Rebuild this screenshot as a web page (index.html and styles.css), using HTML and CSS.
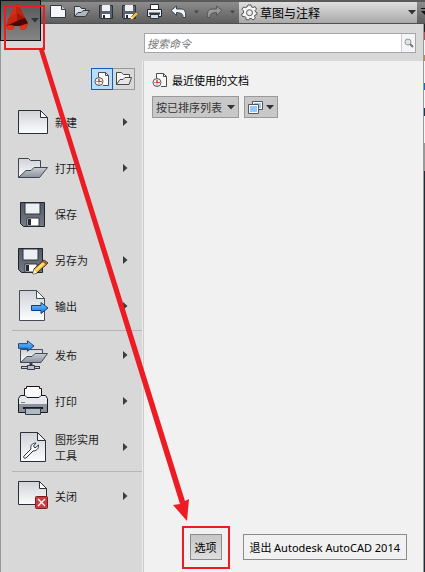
FILE: index.html
```html
<!DOCTYPE html>
<html lang="zh-CN">
<head>
<meta charset="utf-8">
<title>AutoCAD 2014</title>
<link rel="stylesheet" href="styles.css">
</head>
<body>
<svg class="defs" aria-hidden="true">
  <defs>
    <linearGradient id="paper" x1="0" y1="0" x2="0" y2="1"><stop offset="0" stop-color="#cfd2d8"/><stop offset="1" stop-color="#fdfdfd"/></linearGradient>
    <linearGradient id="steel" x1="0" y1="0" x2="0" y2="1"><stop offset="0" stop-color="#c9ced4"/><stop offset="1" stop-color="#8b929c"/></linearGradient>
    <linearGradient id="blue" x1="0" y1="0" x2="0" y2="1"><stop offset="0" stop-color="#7cc0fb"/><stop offset="1" stop-color="#0878e8"/></linearGradient>
    <linearGradient id="disk" x1="0" y1="0" x2="0" y2="1"><stop offset="0" stop-color="#545b66"/><stop offset="1" stop-color="#747b86"/></linearGradient>
    <symbol id="i-new" viewBox="0 0 32 32"><path d="M1.5 4.5H23.5L30.5 11.5V27.5H1.5Z" fill="url(#paper)" stroke="#2a2f38"/><path d="M23.5 4.5V11.5H30.5Z" fill="#fff" stroke="#2a2f38"/></symbol>
    <symbol id="i-open" viewBox="0 0 32 32"><path d="M1.5 25.5V6.5H11.5L13.5 8.5H23.5V16" fill="url(#paper)" stroke="#3f4650"/><path d="M1.5 25.5L9 18.5H14L17 15.5H30.5L22.5 25.5Z" fill="url(#steel)" stroke="#3f4650"/></symbol>
    <symbol id="i-save" viewBox="0 0 32 32"><path d="M3.5 4.5H27.5V28.5H6.5L3.5 25.5Z" fill="url(#disk)" stroke="#1f242c"/><path d="M8 5H23V16H8Z" fill="#edf0f3" stroke="#303640"/><path d="M10 20H22V28H10Z" fill="#fff" stroke="#303640"/><path d="M11 21H14V27H11Z" fill="#252a32"/></symbol>
    <symbol id="i-saveas" viewBox="0 0 32 32"><path d="M1.5 4.5H25.5V28.5H4.5L1.5 25.5Z" fill="url(#disk)" stroke="#1f242c"/><path d="M6 5H21V16H6Z" fill="#edf0f3" stroke="#303640"/><path d="M8 20H20V28H8Z" fill="#fff" stroke="#303640"/><path d="M9 21H12V27H9Z" fill="#252a32"/><path d="M16 30L17 25L27 16L31 19L20 29Z" fill="#f6bd36" stroke="#222"/><path d="M16 30L17 25L20 29Z" fill="#fff3d4"/><path d="M25 18L27 16L31 19L29 21Z" fill="#a75c30"/><path d="M19 26L27 19" stroke="#ffe9a0" stroke-width="1.5"/></symbol>
    <symbol id="i-arrow" viewBox="0 0 18 12"><path d="M.5 3.500H10V.5L17 6L10 11.500V8.500H.5Z" fill="url(#blue)" stroke="#123f73"/></symbol>
    <symbol id="i-export" viewBox="0 0 32 32"><path d="M2.500 .5H19.500L27.500 8.500V30.500H2.500Z" fill="url(#paper)" stroke="#454b55"/><path d="M19.500 .5V8.500H27.500Z" fill="#fff" stroke="#454b55"/><use href="#i-arrow" x="14" y="12" width="18" height="12"/></symbol>
    <symbol id="i-publish" viewBox="0 0 32 32"><path d="M3.500 23.500V10.500H25.500V14" fill="url(#paper)" stroke="#454b55"/><path d="M3.500 23.500L10 17.500H15L18 14.500H30.500L24 23.500Z" fill="url(#steel)" stroke="#454b55"/><path d="M14 24V28M4 28.500H23" stroke="#343b45" stroke-width="3"/><path d="M5 28.500H22" stroke="#cbd1da"/><path d="M10.500 26.500H17.500V30.500H10.500Z" fill="#b8c1cc" stroke="#343b45"/><use href="#i-arrow" x="1" y="1" width="17" height="12"/></symbol>
    <symbol id="i-print" viewBox="0 0 32 32"><path d="M7.500 12V3.500H9.500V1.500H22.500V3.500H24.500V12" fill="#fbfbfc" stroke="#15191f"/><path d="M1.500 13.500L3.500 10.500H8L10 12.500H22L24 10.500H28.500L30.500 13.500V27.500H1.500Z" fill="#e6e9ee" stroke="#15191f"/><path d="M2 19H30V27H2Z" fill="#8b929c"/><path d="M4 17.500H8" stroke="#7a818b"/><path d="M6 22H26V24H6Z" fill="#15191f"/><path d="M8.500 23.500H23.500V29.500H8.500Z" fill="#aebbc5" stroke="#343b45"/></symbol>
    <symbol id="i-tools" viewBox="0 0 32 32"><path d="M3.500 1.500H20.500L28.500 9.500V30.500H3.500Z" fill="url(#paper)" stroke="#2a2f38"/><path d="M20.500 1.500V9.500H28.500Z" fill="#f2f2f2" stroke="#2a2f38"/><path d="M7 25L14 18C13 15 15 12 19 12L16.500 15L18 17L21.500 14C22 18 19 20 16 20L9 27C7 28 6 26 7 25Z" fill="#fff" stroke="#2a2f38"/></symbol>
    <symbol id="i-close" viewBox="0 0 32 32"><path d="M1.500 1.500H22.500L29.500 8.500V24.500H1.500Z" fill="url(#paper)" stroke="#2a2f38"/><path d="M22.500 1.500V8.500H29.500Z" fill="#fff" stroke="#2a2f38"/><rect x="18.500" y="16.500" width="12" height="12" rx="1" fill="#c43d43" stroke="#841a20"/><path d="M21 19L28 26M28 19L21 26" stroke="#fff" stroke-width="1.300"/></symbol>
    <symbol id="i-recent" viewBox="0 0 16 16"><path d="M4.500 6V1.500H11.500L14.500 4.500V14.500H9" fill="#fafafa" stroke="#4d4d4d"/><path d="M11.500 1.500V4.500H14.500" fill="none" stroke="#4d4d4d"/><circle cx="5" cy="10.500" r="4" fill="#f8f8f8" stroke="#555"/><path d="M5 7V14M1.500 10.500H5" stroke="#999"/><path d="M5 8V10.500H8" fill="none" stroke="#e23222" stroke-width="1.200"/></symbol>
    <symbol id="i-folder" viewBox="0 0 16 16"><path d="M.5 13.500V1.500H5.500L7.500 3.500H13.500V6" fill="#f4f4f4" stroke="#484848"/><path d="M.5 13.500L4 8.500H7L9 6.500H15.500L13 13.500Z" fill="#e7e7e7" stroke="#484848"/></symbol>
    <symbol id="i-down" viewBox="0 0 8 5"><path d="M0 0H8L4 4.500Z" fill="currentColor"/></symbol>
    <symbol id="i-right" viewBox="0 0 5 8"><path d="M0 0L4.500 4L0 8Z" fill="#3c3c3c"/></symbol>
  </defs>
</svg>

<div class="app">
  <header class="titlebar">
    <button class="logo" aria-label="应用程序菜单">
      <svg width="24" height="28" viewBox="0 0 24 28"><path d="M11 0H13L20 14L23 19L21 25L16 26L15 22H9L8 26L3 26L1 22L4 14Z" fill="#b01d0e"/><path d="M11 0L12 17L1 22L4 14Z" fill="#d92c16"/><path d="M11 0H13L20 14L12 17Z" fill="#c2230f"/><path d="M4 14L12 9L12 17L1 22Z" fill="#c9240f"/><path d="M12 9L20 14L12 17Z" fill="#a01509"/><path d="M1 22L12 17L20 14L23 19L18 21L15 22H9L6 21Z" fill="#4a0704"/><path d="M1 22L6 21L9 22L8 26H3ZM15 22L18 21L22 20L21 25L16 26Z" fill="#e2321a"/></svg>
      <svg class="logo-caret" width="8" height="5"><use href="#i-down"/></svg>
    </button>
    <nav class="quick" aria-label="快速访问工具栏">
      <button aria-label="新建"><svg width="17" height="17" viewBox="0 0 17 17"><path d="M.5 2.500H11.500L15.500 6.500V14.500H.5Z" fill="#f5f6f8" stroke="#343a43"/><path d="M11.500 2.500V6.500H15.500" fill="#ccd0d5" stroke="#343a43"/></svg></button>
      <button aria-label="打开"><svg width="17" height="17" viewBox="0 0 17 17"><path d="M.5 13.500V3.500H5.500L7.500 5.500H11.500V8" fill="#dce0e6" stroke="#343a43"/><path d="M.5 13.500L4 9.500H7L9 7.500H15.500L11.500 13.500Z" fill="#aeb5bf" stroke="#343a43"/></svg></button>
      <button aria-label="保存"><svg width="16" height="16" viewBox="0 0 16 16"><path d="M1.500 1.500H14.500V14.500H2.500L1.500 13.500Z" fill="#596170" stroke="#2b303a"/><path d="M4 1H12V7H4Z" fill="#eef0f3"/><path d="M4 10H12V14H4Z" fill="#fff"/><path d="M5 11H7V14H5Z" fill="#252a32"/></svg></button>
      <button aria-label="另存为"><svg width="17" height="16" viewBox="0 0 17 16"><path d="M.5 1.500H13.500V14.500H1.500L.5 13.500Z" fill="#596170" stroke="#2b303a"/><path d="M3 1H11V7H3Z" fill="#eef0f3"/><path d="M3 10H11V14H3Z" fill="#fff"/><path d="M4 11H6V14H4Z" fill="#252a32"/><path d="M8.500 15.500L9.500 12.500L14 8L16.500 10L11.500 14.500Z" fill="#f6bd36" stroke="#5a4020" stroke-width=".6"/><path d="M8.500 15.500L9.500 12.500L11.500 14.500Z" fill="#fff3d4"/></svg></button>
      <button aria-label="打印"><svg width="17" height="17" viewBox="0 0 17 17"><path d="M4.500 7V1.500H12.500V7" fill="#fff" stroke="#22272f"/><path d="M1.500 6.500H15.500V13.500H1.500Z" fill="#eceff3" stroke="#22272f"/><path d="M3 10.500H14" stroke="#30363f" stroke-width="2"/><path d="M4.500 11.500H12.500V15.500H4.500Z" fill="#d8e0e7" stroke="#30363f"/></svg></button>
      <button class="wide" aria-label="放弃"><svg width="17" height="14" viewBox="0 0 17 14"><path d="M1 5.500L6.500 1V4H11C15 4 16 7 15.500 12.500H13C13 9 12 8 6.500 7.500V10.500Z" fill="#f0f3f5" stroke="#3c444c"/></svg><svg width="5" height="4" viewBox="0 0 8 5"><path d="M0 0H8L4 5Z" fill="#454545"/></svg></button>
      <button class="wide" aria-label="重做"><svg width="17" height="14" viewBox="0 0 17 14"><path d="M16 5.500L10.500 1V4H6C2 4 1 7 1.500 12.500H4C4 9 5 8 10.500 7.500V10.500Z" fill="#999" stroke="#555"/></svg><svg width="5" height="4" viewBox="0 0 8 5"><path d="M0 0H8L4 5Z" fill="#454545"/></svg></button>
    </nav>
    <button class="workspace">
      <svg width="17" height="17" viewBox="0 0 17 17"><path d="M7 1H10L10.500 3L12 3.500L14 2.500L15.500 5L14 6.500L14.500 8L16 8.500V10.500L14 11L13.500 12.500L14.500 14L12 16L10.500 14.500H8.500L7.500 16L5 15.500V13.500L3.500 12.500L1.500 12.500L.5 10L2.500 9V7L1 5.500L2.500 3L4.500 3.500L6 3Z" fill="#f5f5f5" stroke="#555"/><circle cx="8.500" cy="8.700" r="3" fill="#eee" stroke="#555"/></svg>
      <span>草图与注释</span>
      <svg class="end" width="8" height="5"><use href="#i-down"/></svg>
    </button>
    <button class="more" aria-label="自定义"><svg width="8" height="8" viewBox="0 0 8 8"><path d="M3 .5H8" stroke="#111"/><path d="M3 3H11L7 7Z" fill="#111"/></svg></button>
  </header>

  <main class="panel">
    <aside class="menu">
      <div class="tabs">
        <button class="tab active" aria-label="最近使用的文档"><svg width="16" height="16"><use href="#i-recent"/></svg></button>
        <button class="tab" aria-label="打开文档"><svg width="16" height="16"><use href="#i-folder"/></svg></button>
      </div>
      <nav class="items">
        <button class="item"><svg width="32" height="32"><use href="#i-new"/></svg><span>新建</span><svg width="5" height="8"><use href="#i-right"/></svg></button>
        <button class="item"><svg width="32" height="32"><use href="#i-open"/></svg><span>打开</span><svg width="5" height="8"><use href="#i-right"/></svg></button>
        <button class="item"><svg width="32" height="32"><use href="#i-save"/></svg><span>保存</span></button>
        <button class="item"><svg width="32" height="32"><use href="#i-saveas"/></svg><span>另存为</span><svg width="5" height="8"><use href="#i-right"/></svg></button>
        <button class="item"><svg width="32" height="32"><use href="#i-export"/></svg><span>输出</span><svg width="5" height="8"><use href="#i-right"/></svg></button>
        <hr>
        <button class="item"><svg width="32" height="32"><use href="#i-publish"/></svg><span>发布</span><svg width="5" height="8"><use href="#i-right"/></svg></button>
        <button class="item"><svg width="32" height="32"><use href="#i-print"/></svg><span>打印</span><svg width="5" height="8"><use href="#i-right"/></svg></button>
        <button class="item"><svg width="32" height="32"><use href="#i-tools"/></svg><span>图形实用工具</span><svg width="5" height="8"><use href="#i-right"/></svg></button>
        <hr>
        <button class="item"><svg width="32" height="32"><use href="#i-close"/></svg><span>关闭</span><svg width="5" height="8"><use href="#i-right"/></svg></button>
      </nav>
    </aside>
    <div class="body">
      <form class="search">
        <input type="text" aria-label="搜索命令" placeholder="搜索命令">
        <button type="button" aria-label="搜索"><svg width="10" height="10" viewBox="0 0 10 10"><circle cx="4" cy="4" r="3" fill="#d7e7e7" stroke="#9a9a9a"/><path d="M6 6L9 9" stroke="#777" stroke-width="2"/></svg></button>
      </form>
      <section class="documents">
        <h1><svg width="16" height="16"><use href="#i-recent"/></svg>最近使用的文档</h1>
        <div class="filters">
          <button class="filter">按已排序列表<svg width="8" height="5"><use href="#i-down"/></svg></button>
          <button class="filter" aria-label="视图"><svg width="15" height="13" viewBox="0 0 15 13"><path d="M4.500 .5H14.500V8.500H4.500Z" fill="#fff" stroke="#555"/><path d="M6 2H13V7H6Z" fill="#92caff"/><path d="M.5 3.500H10.500V12.500H.5Z" fill="#fff" stroke="#555"/><path d="M2 5H9V11H2Z" fill="#92caff"/></svg><svg width="8" height="5"><use href="#i-down"/></svg></button>
        </div>
        <footer class="actions">
          <button class="action options">选项</button>
          <button class="action exit">退出 <span class="product">Autodesk AutoCAD 2014</span></button>
        </footer>
      </section>
    </div>
    <div class="backdrop"></div>
  </main>
  <svg class="annotation" viewBox="0 0 425 572" aria-hidden="true"><path d="M5 6H44V49H5ZM183 527H229V568H183Z" fill="none" stroke="#ed1c24" stroke-width="2"/><path d="M39 50L43 47L185 501L189 499L187 521L173 505L180 504Z" fill="#ed1c24"/></svg>
</div>
</body>
</html>
```

FILE: styles.css
```css
* { box-sizing: border-box; }
body { margin: 0; font: 11px/16px "Noto Sans CJK SC", sans-serif; color: #1c1c1c; }
button { margin: 0; padding: 0; border: 0; background: none; font: inherit; color: inherit; }
svg { display: block; flex: none; }
.defs { position: absolute; width: 0; height: 0; }
.app { position: relative; display: flex; flex-direction: column; min-height: 100vh; }
.titlebar { display: flex; height: 24px; background: linear-gradient(#5a5a5a 0 2px, #8c8c8c 2px, #5e5e5e); border-bottom: 1px solid #505050; }
.logo { position: relative; z-index: 1; display: flex; align-items: flex-start; gap: 2px; width: 41px; height: 41px; padding: 3px 0 0 4px; border: 1px solid #111; background: linear-gradient(#555, #858585); color: #303640; }
.logo-caret { margin-top: 14px; }
.quick { display: flex; align-items: center; gap: 8px; padding: 0 5px 0 9px; }
.quick button { width: 16px; }
.quick .wide { display: flex; align-items: center; gap: 7px; width: 28px; }
.workspace { flex: 1; display: flex; align-items: center; gap: 2px; height: 21px; margin: 2px 1px 0 0; padding: 0 1px 0 2px; background: linear-gradient(#dedede, #a9a9a9); font-size: 12px; color: #000; text-align: left; }
.end { margin-left: auto; color: #333; }
.more { width: 7px; overflow: hidden; }
.panel { flex: 1; display: grid; grid-template-columns: 142px 1fr 1px; background: #d8d8d8; border-left: 1px solid #999; }
.menu { padding: 44px 0 0; }
.tabs { display: flex; justify-content: flex-end; padding-right: 8px; }
.tab { display: grid; place-items: center; width: 22px; height: 22px; border: 1px solid #999; }
.tab + .tab { border-left: 0; }
.tab.active { border-color: #0a62b8; background: #b9dcfa; }
.items { margin-top: 9px; }
.item { display: flex; align-items: center; width: 100%; height: 46px; padding: 0 15px 0 16px; text-align: left; }
.item span { width: 46px; margin-left: 6px; }
.item span + svg { margin-left: auto; }
hr { height: 1px; margin: 1px 1px 1px 11px; border: 0; background: #b5b5b5; }
.body { display: flex; flex-direction: column; border-right: 1px solid #999; }
.search { display: flex; height: 20px; margin: 9px 7px 8px 1px; border: 1px solid #a5a5ad; background: #fff; }
.search input { flex: 1; min-width: 0; padding: 0 2px; border: 0; outline: 0; background: none; font: italic 11px/16px "Noto Sans CJK SC", sans-serif; }
.search input::placeholder { color: #777; opacity: 1; }
.search button { display: grid; place-items: center; width: 14px; border-left: 1px solid #ccc; background: #f5f5f5; }
.documents { flex: 1; display: flex; flex-direction: column; padding: 11px 16px 12px 8px; border-left: 1px solid #ccc; box-shadow: -1px 0 #ececec; background: #f1f1f1; }
h1 { display: flex; align-items: center; gap: 4px; margin: 0 0 8px; font-size: 11px; font-weight: 400; color: #000; }
.filters { display: flex; gap: 5px; }
.filter { display: flex; align-items: center; gap: 5px; height: 22px; padding: 0 3px; border: 1px solid #999; background: #c8c8c8; color: #333; }
.filter + .filter { gap: 3px; }
.actions { display: flex; justify-content: flex-end; gap: 21px; margin-top: auto; white-space: nowrap; }
.action { height: 26px; padding: 0 4px; border: 1px solid #8b8b8b; color: #000; }
.exit { padding: 0 6px; }
.options { background: linear-gradient(#c6c6c6, #dedede); }
.product { font-family: "Noto Sans", sans-serif; }
.backdrop { background: linear-gradient(#222 0 8px, #a55 8px 16px, #f4f4f4 16px 31px, #b98a4a 31px 37px, #f4f4f4 37px 59px, #0a6cd0 59px 66px, #f4f4f4 66px 84px, #17395e 84px 92px, #f4f4f4 92px 119px, #999 119px 147px, #202a38 147px); }
.annotation { position: absolute; top: 0; left: 0; width: 425px; height: 572px; pointer-events: none; z-index: 2; }
```
